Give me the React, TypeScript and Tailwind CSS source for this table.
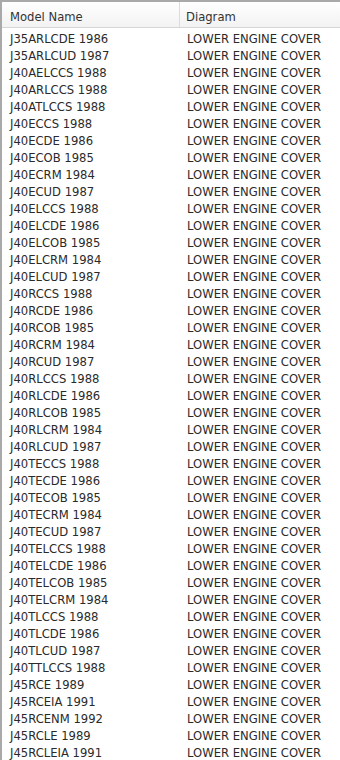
const rows: [string, string][] = [
  ['J35ARLCDE 1986', 'LOWER ENGINE COVER'],
  ['J35ARLCUD 1987', 'LOWER ENGINE COVER'],
  ['J40AELCCS 1988', 'LOWER ENGINE COVER'],
  ['J40ARLCCS 1988', 'LOWER ENGINE COVER'],
  ['J40ATLCCS 1988', 'LOWER ENGINE COVER'],
  ['J40ECCS 1988', 'LOWER ENGINE COVER'],
  ['J40ECDE 1986', 'LOWER ENGINE COVER'],
  ['J40ECOB 1985', 'LOWER ENGINE COVER'],
  ['J40ECRM 1984', 'LOWER ENGINE COVER'],
  ['J40ECUD 1987', 'LOWER ENGINE COVER'],
  ['J40ELCCS 1988', 'LOWER ENGINE COVER'],
  ['J40ELCDE 1986', 'LOWER ENGINE COVER'],
  ['J40ELCOB 1985', 'LOWER ENGINE COVER'],
  ['J40ELCRM 1984', 'LOWER ENGINE COVER'],
  ['J40ELCUD 1987', 'LOWER ENGINE COVER'],
  ['J40RCCS 1988', 'LOWER ENGINE COVER'],
  ['J40RCDE 1986', 'LOWER ENGINE COVER'],
  ['J40RCOB 1985', 'LOWER ENGINE COVER'],
  ['J40RCRM 1984', 'LOWER ENGINE COVER'],
  ['J40RCUD 1987', 'LOWER ENGINE COVER'],
  ['J40RLCCS 1988', 'LOWER ENGINE COVER'],
  ['J40RLCDE 1986', 'LOWER ENGINE COVER'],
  ['J40RLCOB 1985', 'LOWER ENGINE COVER'],
  ['J40RLCRM 1984', 'LOWER ENGINE COVER'],
  ['J40RLCUD 1987', 'LOWER ENGINE COVER'],
  ['J40TECCS 1988', 'LOWER ENGINE COVER'],
  ['J40TECDE 1986', 'LOWER ENGINE COVER'],
  ['J40TECOB 1985', 'LOWER ENGINE COVER'],
  ['J40TECRM 1984', 'LOWER ENGINE COVER'],
  ['J40TECUD 1987', 'LOWER ENGINE COVER'],
  ['J40TELCCS 1988', 'LOWER ENGINE COVER'],
  ['J40TELCDE 1986', 'LOWER ENGINE COVER'],
  ['J40TELCOB 1985', 'LOWER ENGINE COVER'],
  ['J40TELCRM 1984', 'LOWER ENGINE COVER'],
  ['J40TLCCS 1988', 'LOWER ENGINE COVER'],
  ['J40TLCDE 1986', 'LOWER ENGINE COVER'],
  ['J40TLCUD 1987', 'LOWER ENGINE COVER'],
  ['J40TTLCCS 1988', 'LOWER ENGINE COVER'],
  ['J45RCE 1989', 'LOWER ENGINE COVER'],
  ['J45RCEIA 1991', 'LOWER ENGINE COVER'],
  ['J45RCENM 1992', 'LOWER ENGINE COVER'],
  ['J45RCLE 1989', 'LOWER ENGINE COVER'],
  ['J45RCLEIA 1991', 'LOWER ENGINE COVER'],
];

export default function App() {
  return (
    <div className="w-[340px] h-[760px] overflow-hidden bg-white border-t-2 border-l-2 border-[#a9a9a9] font-['DejaVu_Sans',Verdana,sans-serif] text-[11.6px] text-[#2a2a2a]">
      {/* Header */}
      <div className="flex h-[26px] bg-gradient-to-b from-white to-[#f2f2f2] border-b border-[#d6d6d6] text-[#333]">
        <div className="w-[178px] pl-[8px] pt-[10px] leading-none border-r border-[#dcdcdc]">Model Name</div>
        <div className="flex-1 pl-[6px] pt-[10px] leading-none">Diagram</div>
      </div>

      {/* Rows */}
      <div className="pt-[3px]">
        {rows.map(([model, diagram]) => (
          <div key={model} className="flex h-[17px] items-center">
            <div className="w-[179px] pl-[8px] whitespace-nowrap">{model}</div>
            <div className="flex-1 pl-[6px] whitespace-nowrap">{diagram}</div>
          </div>
        ))}
      </div>
    </div>
  );
}
